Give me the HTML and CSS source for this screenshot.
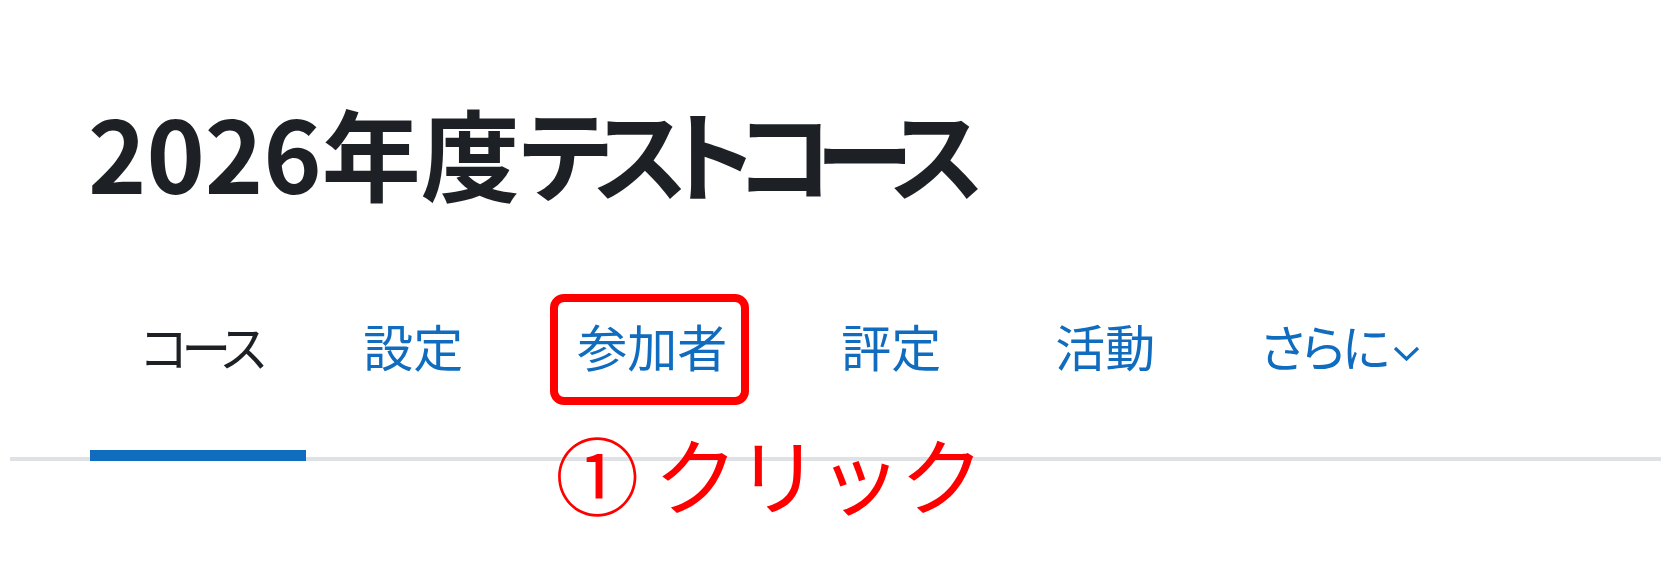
FILE: index.html
```html
<!DOCTYPE html>
<html lang="ja">
<head>
    <meta charset="UTF-8">
    <meta name="viewport" content="width=device-width, initial-scale=1.0">
    <title>2026年度テストコース</title>
    <link rel="stylesheet" href="styles.css">
</head>
<body>
    <div class="page">
        <header class="page-header">
            <h1 class="course-title">2026年度<span class="kana">テストコース</span></h1>
        </header>

        <nav class="secondary-nav">
            <ul class="nav-tabs">
                <li class="nav-item"><a class="nav-link active" href="#"><span class="kana">コース</span></a></li>
                <li class="nav-item"><a class="nav-link" href="#">設定</a></li>
                <li class="nav-item">
                    <a class="nav-link" href="#">参加者</a>
                    <!-- callout drawn over the tab -->
                    <span class="mark-box"></span>
                    <span class="mark-note">① クリック</span>
                </li>
                <li class="nav-item"><a class="nav-link" href="#">評定</a></li>
                <li class="nav-item"><a class="nav-link" href="#">活動</a></li>
                <li class="nav-item more">
                    <a class="nav-link dropdown-toggle" href="#"><span class="kana">さらに</span><svg class="caret" width="27" height="15" viewBox="0 0 27 15"><path d="M2 2 L13.5 13 L25 2" fill="none" stroke="currentColor" stroke-width="3.2"/></svg></a>
                </li>
            </ul>
        </nav>
    </div>
</body>
</html>
```

FILE: styles.css
```css
:root {
    --text-dark: #1d2125;
    --link: #0f6cbf;
    --line: #dee2e6;
    --mark: #ff0000;
}

body {
    margin: 0;
    min-height: 100vh;
    background: #fff;
    color: var(--text-dark);
    font-family: "Noto Sans CJK JP", "Noto Sans", sans-serif;
}

.page {
    padding-left: 10px;
}

.page-header {
    padding: 92px 0 0 78px;
}

.course-title {
    margin: 0;
    font-size: 99px;
    line-height: 119px;
    font-weight: 700;
}

.course-title .kana {
    letter-spacing: -0.17em;
    font-feature-settings: "palt";
}

.secondary-nav {
    margin-top: 98px;
}

.nav-tabs {
    display: flex;
    margin: 0;
    padding: 0 0 0 80px;
    list-style: none;
    border-bottom: 4px solid var(--line);
}

.nav-item {
    position: relative;
}

.nav-item.more {
    margin-left: -9px;
}

.nav-link {
    display: flex;
    align-items: center;
    padding: 0 57px 68px;
    margin-bottom: -4px;
    font-size: 50px;
    line-height: 73px;
    color: var(--link);
    text-decoration: none;
    border-bottom: 11px solid transparent;
}

.nav-item:first-child .nav-link {
    padding-left: 51px;
}

.nav-link .kana {
    letter-spacing: -7px;
    margin-right: -10px;
    font-feature-settings: "palt";
}

.dropdown-toggle .kana {
    letter-spacing: -3px;
}

.nav-link.active {
    color: var(--text-dark);
    border-bottom-color: var(--link);
}

.caret {
    margin-left: 16px;
    margin-top: 16px;
}

/* red annotation over the participants tab */
.mark-box {
    position: absolute;
    left: 30px;
    top: -15px;
    width: 199px;
    height: 111px;
    box-sizing: border-box;
    border: 8px solid var(--mark);
    border-radius: 14px;
    pointer-events: none;
}

.mark-note {
    position: absolute;
    left: 35px;
    top: 122px;
    font-size: 84px;
    line-height: 1;
    letter-spacing: -2px;
    color: var(--mark);
    white-space: nowrap;
}
```
